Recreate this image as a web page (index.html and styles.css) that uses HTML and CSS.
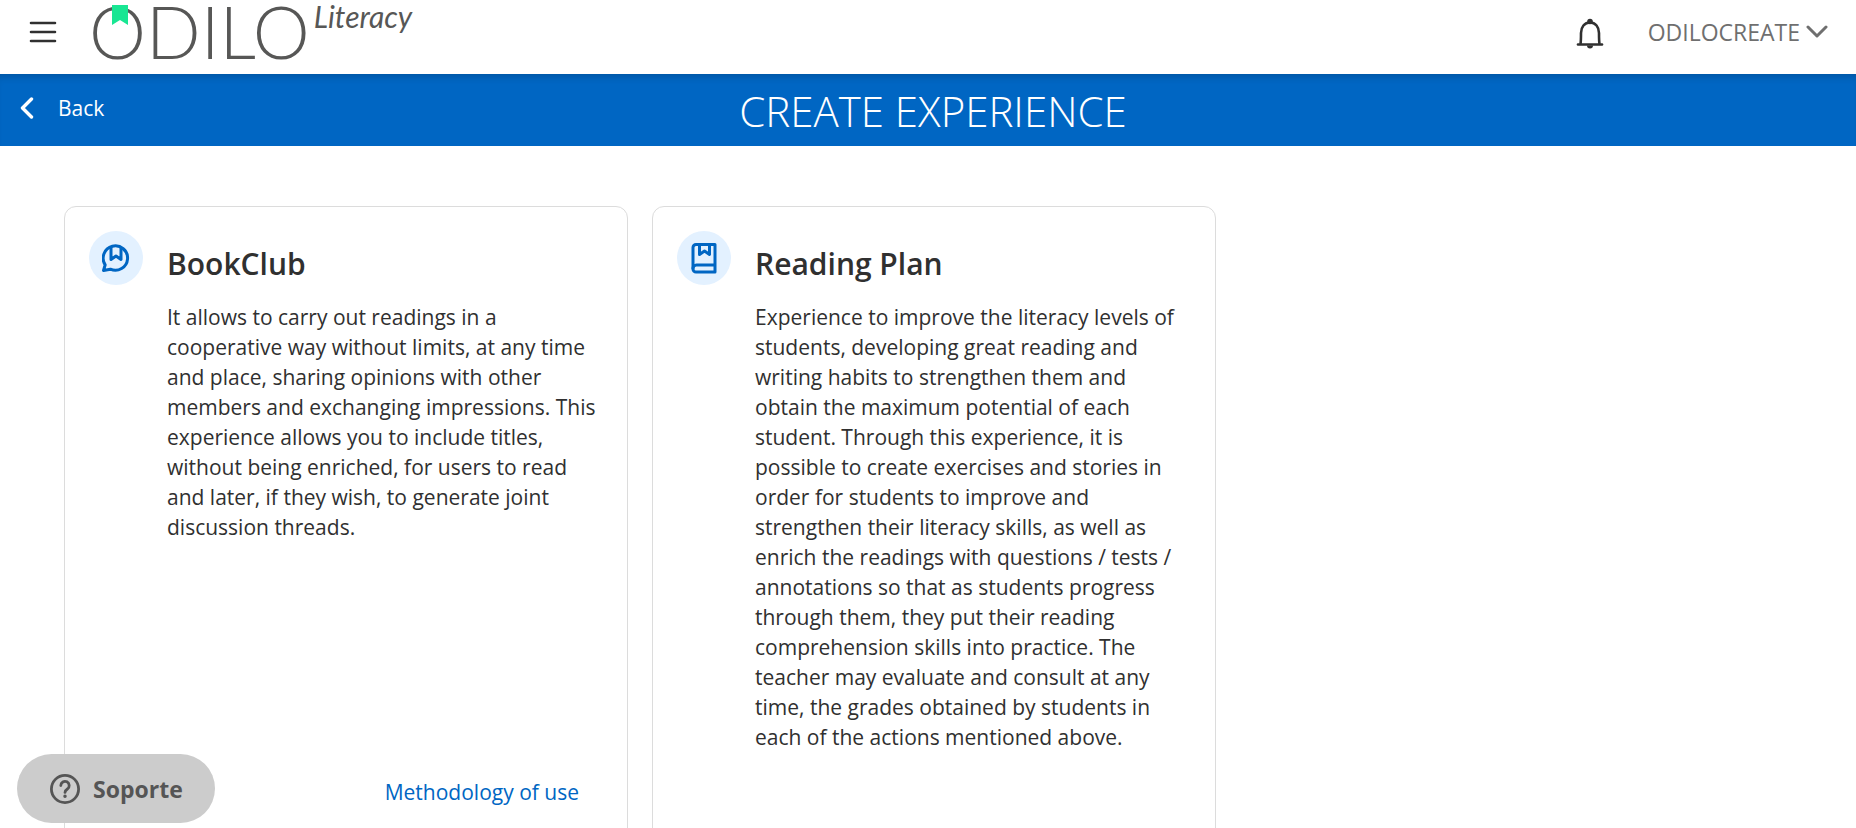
FILE: index.html
```html
<!DOCTYPE html>
<html lang="en">
<head>
  <meta charset="UTF-8">
  <meta name="viewport" content="width=device-width, initial-scale=1">
  <title>Create experience</title>
  <link rel="stylesheet" href="styles.css">
</head>
<body>
<header class="header">
  <button type="button" class="icon-btn menu-btn" aria-label="Menu">
    <svg width="28" height="22" viewBox="0 0 28 22" fill="none" stroke="#303030" stroke-width="2.6" stroke-linecap="round">
      <path d="M2 2h24M2 11h24M2 20h24"/>
    </svg>
  </button>
  <a href="#" class="logo">
    <span class="logo-name">ODILO</span>
    <svg class="logo-mark" width="16" height="20" viewBox="0 0 16 20"><path d="M0 0h16v20l-8-5-8 5z" fill="#19e693"/></svg>
    <span class="logo-sub">Literacy</span>
  </a>
  <button type="button" class="icon-btn bell-btn" aria-label="Notifications">
    <svg width="28" height="32" viewBox="0 0 28 32">
      <path d="M4.500 26C5 23 5 20 5 15 5 9 8.500 4.500 14 4.500S23 9 23 15c0 5 0 8 .5 11" fill="none" stroke="#303030" stroke-width="2.600"/>
      <path d="M2 26.500h24" stroke="#303030" stroke-width="2.600" stroke-linecap="round"/>
      <circle cx="14" cy="3.500" r="2.800" fill="#303030"/>
      <path d="M11 27.500h6a3 3 0 0 1-6 0z" fill="#303030"/>
    </svg>
  </button>
  <button type="button" class="user-btn">
    ODILOCREATE
    <svg width="22" height="14" viewBox="0 0 22 14" fill="none" stroke="#6f6f6f" stroke-width="3" stroke-linecap="round" stroke-linejoin="round"><path d="M2 2l9 9 9-9"/></svg>
  </button>
</header>

<div class="title-bar">
  <a href="#" class="back">
    <svg width="14" height="22" viewBox="0 0 14 22" fill="none" stroke="#fff" stroke-width="3.400" stroke-linecap="round" stroke-linejoin="round"><path d="M11.500 2l-9 9 9 9"/></svg>
    Back
  </a>
  <h1>CREATE EXPERIENCE</h1>
</div>

<main class="cards">
  <article class="card">
    <span class="card-icon">
      <svg width="28" height="28" viewBox="0 0 28 28" fill="none" stroke="#0066c3" stroke-width="3" stroke-linejoin="round">
        <path d="M1.500 26.500l1.700-5.700A12.200 12.200 0 1 1 8.400 25.200z"/>
        <path d="M9 3v12.500l5-3.500 5 3.500V3"/>
      </svg>
    </span>
    <div class="card-body">
      <h2>BookClub</h2>
      <p>It allows to carry out readings in a cooperative way without limits, at any time and place, sharing opinions with other members and exchanging impressions. This experience allows you to include titles, without being enriched, for users to read and later, if they wish, to generate joint discussion threads.</p>
      <a href="#" class="method">Methodology of use</a>
    </div>
  </article>
  <article class="card">
    <span class="card-icon">
      <svg width="26" height="32" viewBox="0 0 26 32" fill="none" stroke="#0066c3" stroke-width="3" stroke-linejoin="round">
        <path d="M24 2.500H5a3 3 0 0 0-3 3v21.500a3 3 0 0 0 3 3h19z"/>
        <path d="M2 27a3.500 3.500 0 0 1 3.500-4H24"/>
        <path d="M8.500 3v9.500l5-3.500 5 3.500V3"/>
      </svg>
    </span>
    <div class="card-body">
      <h2>Reading Plan</h2>
      <p>Experience to improve the literacy levels of students, developing great reading and writing habits to strengthen them and obtain the maximum potential of each student. Through this experience, it is possible to create exercises and stories in order for students to improve and strengthen their literacy skills, as well as enrich the readings with questions / tests / annotations so that as students progress through them, they put their reading comprehension skills into practice. The teacher may evaluate and consult at any time, the grades obtained by students in each of the actions mentioned above.</p>
    </div>
  </article>
</main>

<button type="button" class="support">
  <svg width="32" height="32" viewBox="0 0 32 32" fill="none" stroke="#555" stroke-width="2.800" stroke-linecap="round">
    <circle cx="16" cy="16" r="13.600"/>
    <path d="M11.800 12.500a4.200 4.200 0 1 1 6.600 3.500c-1.600 1.100-2.400 1.700-2.400 3.400"/>
    <circle cx="16" cy="23.300" r="1" fill="#555" stroke-width="1.500"/>
  </svg>
  Soporte
</button>
</body>
</html>
```
FILE: styles.css
```css
* { box-sizing: border-box; margin: 0; padding: 0; }

body { font: 21px/30px "Open Sans", "Noto Sans", sans-serif; color: #303030; background: #fff; }

a { text-decoration: none; color: inherit; }

button { font: inherit; color: inherit; background: none; border: none; cursor: pointer; }

svg { display: block; flex: none; }

/* header */
.header { display: flex; align-items: center; height: 74px; padding: 0 28px; }
.menu-btn { margin-left: 1px; margin-right: 32px; margin-bottom: 10px; }
.logo { position: relative; display: flex; align-items: flex-start; gap: 4px; height: 74px; color: #575756; font-family: Lato, sans-serif; font-weight: 300; }
.logo-name { font-size: 72px; line-height: 62px; }
.logo-mark { position: absolute; left: 23px; top: 5px; }
.logo-sub { font-size: 30px; line-height: 32px; font-style: italic; font-weight: 400; }
.bell-btn { margin-left: auto; margin-right: 44px; margin-bottom: 6px; }
.user-btn { display: flex; align-items: center; gap: 6px; margin-bottom: 10px; font-size: 23px; color: #6f6f6f; }

/* blue bar */
.title-bar { display: grid; grid-template-columns: 1fr auto 1fr; align-items: center; height: 72px; padding: 2px 10px 0 20px; background: #0066c3; box-shadow: inset 0 8px 8px -6px rgba(0, 0, 0, .2); color: #fff; }
.back { display: flex; align-items: center; gap: 24px; padding-bottom: 6px; }
.title-bar h1 { font-size: 42px; line-height: 56px; font-weight: 300; }

/* cards */
.cards { display: grid; grid-template-columns: repeat(3, 1fr); gap: 24px; padding: 60px 52px 60px 64px; }
.card { display: flex; gap: 24px; min-height: 660px; padding: 24px; border: 1px solid #dcdcdc; border-radius: 12px; }
.card-icon { display: flex; flex: none; align-items: center; justify-content: center; width: 54px; height: 54px; border-radius: 50%; background: #e3f1ff; }
.card-body { display: flex; flex: 1; flex-direction: column; padding-top: 13px; }
.card-body h2 { margin-bottom: 18px; font-size: 30px; line-height: 40px; font-weight: 600; }
.method { align-self: flex-end; margin-top: auto; margin-bottom: 34px; padding-right: 24px; color: #0066c3; }

/* support launcher */
.support { position: fixed; left: 17px; bottom: 5px; display: flex; align-items: center; gap: 12px; height: 69px; padding: 0 32px; border-radius: 35px; background: #ccc; color: #555; font-size: 23px; font-weight: 700; }
```
